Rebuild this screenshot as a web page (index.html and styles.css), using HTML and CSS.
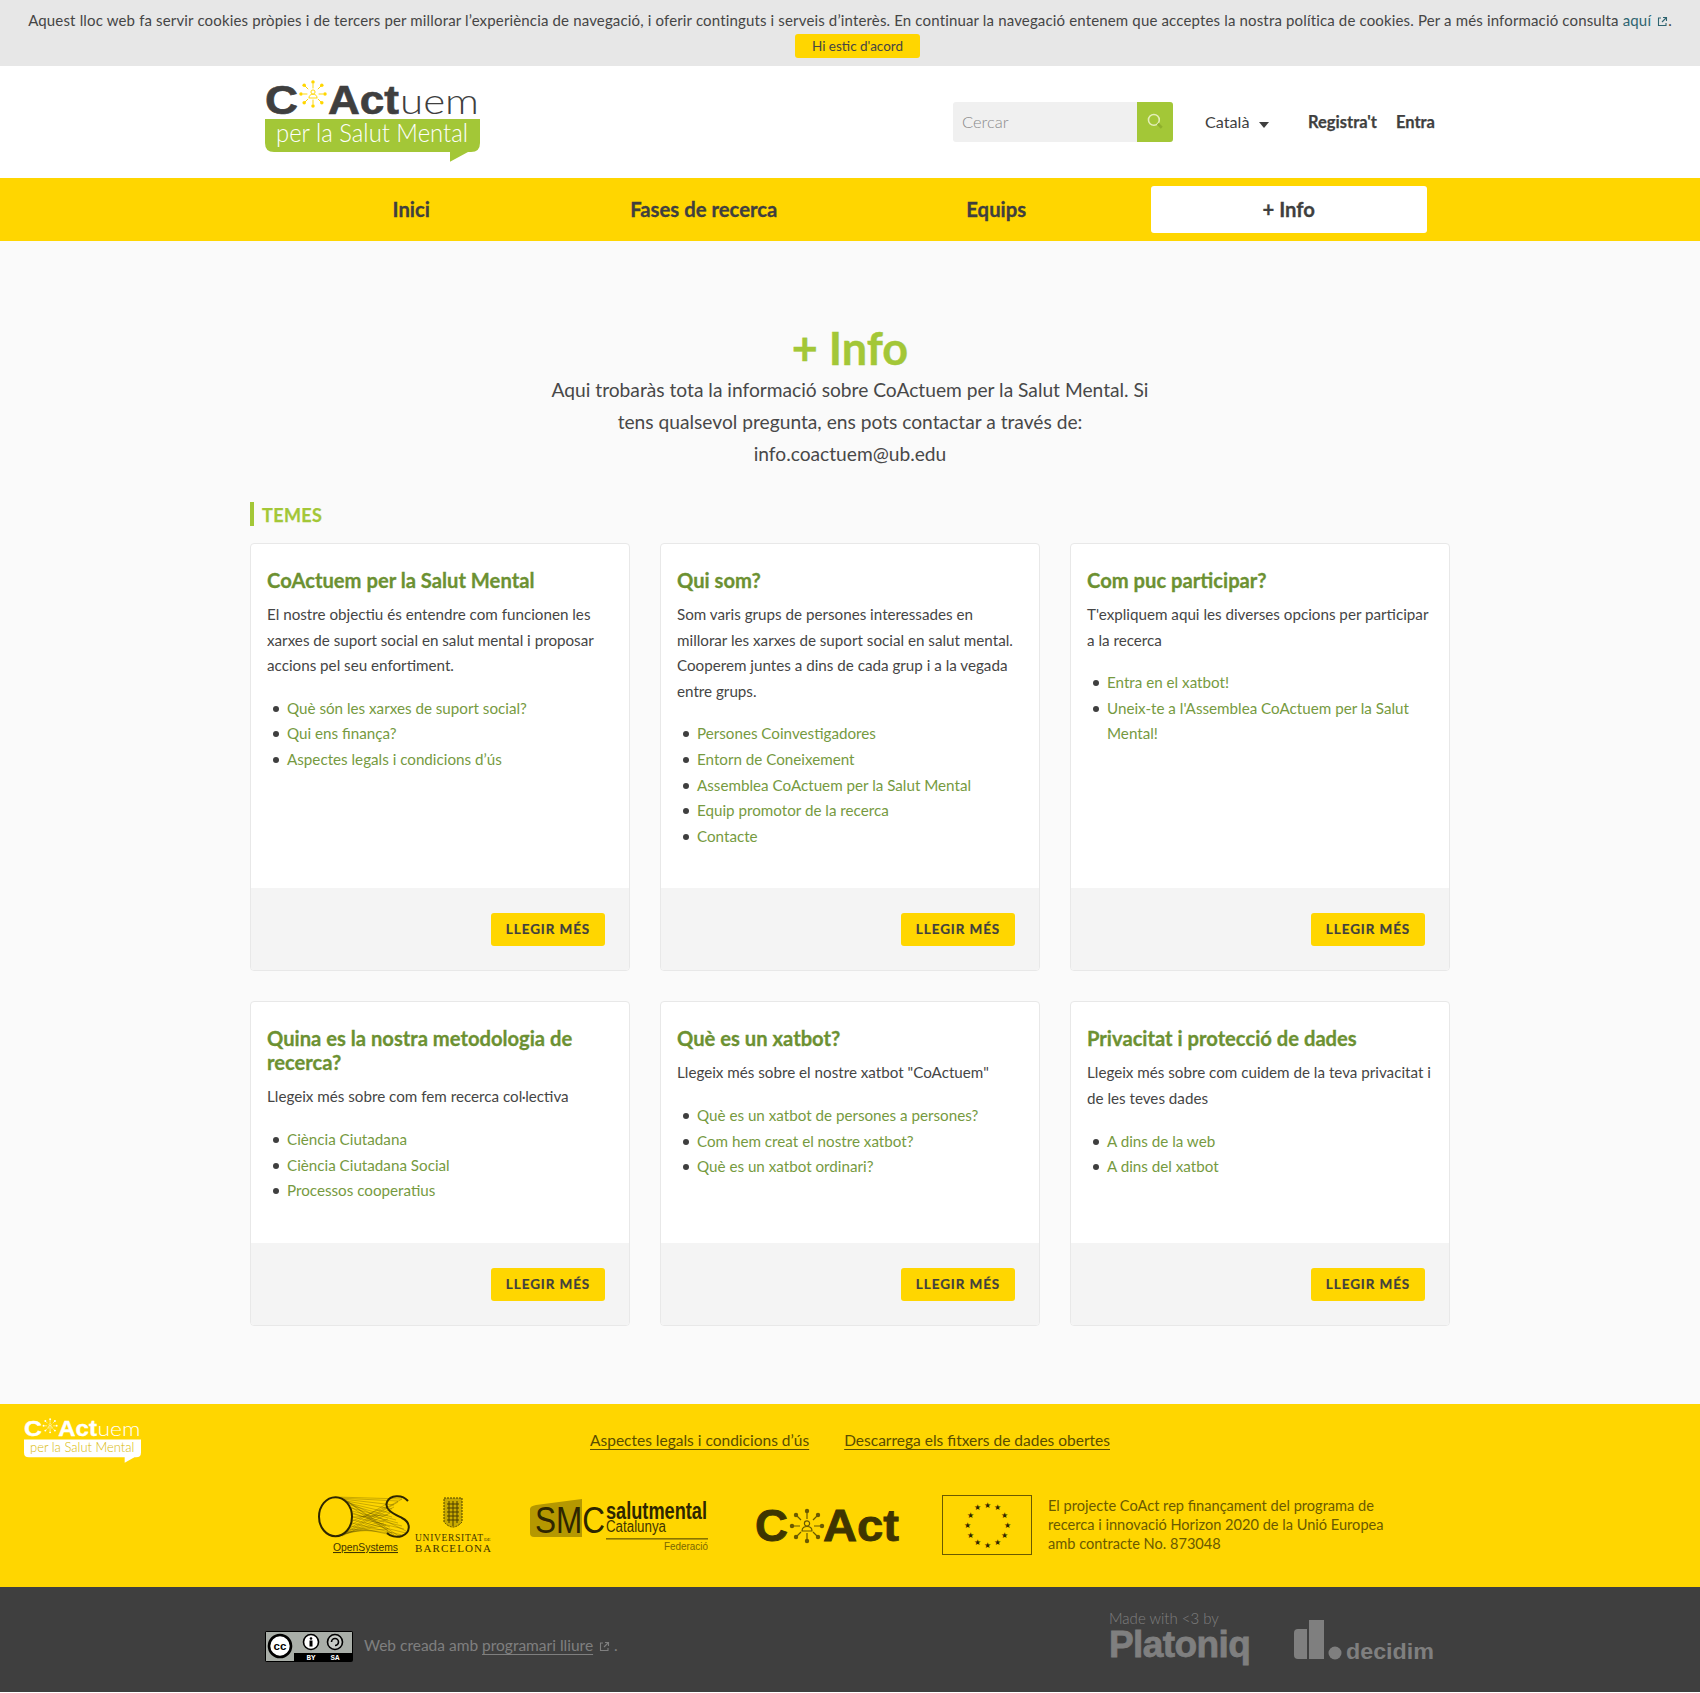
FILE: index.html
```html
<!DOCTYPE html>
<html lang="ca">
<head>
<meta charset="utf-8">
<title>CoActuem per la Salut Mental</title>
<link rel="stylesheet" href="styles.css">
</head>
<body>
<svg class="defs" width="0" height="0" aria-hidden="true">
  <defs>
    <g id="star">
      <g fill="none" stroke="currentColor" stroke-width="1.2">
        <path d="M0-7V-13M0 7V13M-7 0H-13M7 0H13M-6-6L-10-10M6-6L10-10M-6 6L-10 10M6 6L10 10"/>
        <circle cx="0" cy="-2.5" r="2.6"/>
        <path d="M-5 5C-5 1 -2 0.5 0 0.5S5 1 5 5Z"/>
      </g>
      <g fill="currentColor">
        <circle cx="0" cy="-15" r="2.2"/><circle cx="0" cy="15" r="2.2"/><circle cx="-15" cy="0" r="2.2"/><circle cx="15" cy="0" r="2.2"/>
        <circle cx="-11" cy="-11" r="2.2"/><circle cx="11" cy="-11" r="2.2"/><circle cx="-11" cy="11" r="2.2"/><circle cx="11" cy="11" r="2.2"/>
      </g>
    </g>
    <path id="ext" d="M4 2H1.5V9.5H9V7M6 1.5H9.500V5M9.500 1.5L5 6" fill="none" stroke="currentColor" stroke-width="1.1"/>
  </defs>
</svg>

<div class="cookie">
  <p class="cookie-text">Aquest lloc web fa servir cookies pròpies i de tercers per millorar l’experiència de navegació, i oferir continguts i serveis d’interès. En continuar la navegació entenem que acceptes la nostra política de cookies. Per a més informació consulta <a href="#">aquí <svg class="ext" viewBox="0 0 11 11"><use href="#ext"/></svg></a>.</p>
  <a class="cookie-btn" href="#">Hi estic d'acord</a>
</div>

<header class="top">
  <div class="wrap top-row">
    <svg class="logo" viewBox="0 0 215 82" role="img" aria-label="CoActuem per la Salut Mental">
      <text class="lg-b" x="0" y="33.500" font-size="41" fill="#3f3f3f" stroke="#3f3f3f" stroke-width=".7" textLength="33" lengthAdjust="spacingAndGlyphs">C</text>
      <g transform="translate(48 14) scale(.8)"><use href="#star" class="lg-star"/></g>
      <text class="lg-b" x="63" y="33.500" font-size="41" fill="#3f3f3f" stroke="#3f3f3f" stroke-width=".7" textLength="71" lengthAdjust="spacingAndGlyphs">Act</text>
      <text class="lg-r" x="135" y="33.500" font-size="36" fill="#3f3f3f" textLength="79" lengthAdjust="spacingAndGlyphs">uem</text>
      <path d="M0 39H215V63Q215 72 206 72H203L185 81.700V72H9Q0 72 0 63Z" fill="#a3c737"/>
      <text class="lg-r" x="11" y="61.500" font-size="25.500" fill="#fff" textLength="192" lengthAdjust="spacingAndGlyphs">per la Salut Mental</text>
    </svg>
    <div class="top-actions">
      <form class="search">
        <span class="search-input">Cercar</span>
        <span class="search-btn"><svg viewBox="0 0 16 16" width="18" height="18"><circle cx="7" cy="7" r="4.8" fill="none" stroke="#e3eeb8" stroke-width="1.4"/><path d="M10.500 10.500L14 14" stroke="#8fb02c" stroke-width="2.4"/></svg></span>
      </form>
      <span class="lang">Català <i class="caret"></i></span>
      <a class="user-link reg" href="#">Registra't</a>
      <a class="user-link" href="#">Entra</a>
    </div>
  </div>
</header>

<nav class="nav">
  <div class="wrap nav-row">
    <a href="#">Inici</a>
    <a href="#">Fases de recerca</a>
    <a href="#">Equips</a>
    <a href="#" class="active">+ Info</a>
  </div>
</nav>

<main class="main">
  <div class="wrap-wide">
    <h1 class="page-title">+ Info</h1>
    <p class="intro">Aqui trobaràs tota la informació sobre CoActuem per la Salut Mental. Si<br>tens qualsevol pregunta, ens pots contactar a través de:<br>info.coactuem@ub.edu</p>
    <h2 class="section-title">Temes</h2>
    <div class="cards">
      <article class="card">
        <div class="card-main">
          <h3>CoActuem per la Salut Mental</h3>
          <p>El nostre objectiu és entendre com funcionen les<br>xarxes de suport social en salut mental i proposar<br>accions pel seu enfortiment.</p>
          <ul>
            <li><a href="#">Què són les xarxes de suport social?</a></li>
            <li><a href="#">Qui ens finança?</a></li>
            <li><a href="#">Aspectes legals i condicions d’ús</a></li>
          </ul>
        </div>
        <div class="card-foot"><a class="more" href="#">Llegir més</a></div>
      </article>
      <article class="card">
        <div class="card-main">
          <h3>Qui som?</h3>
          <p>Som varis grups de persones interessades en<br>millorar les xarxes de suport social en salut mental.<br>Cooperem juntes a dins de cada grup i a la vegada<br>entre grups.</p>
          <ul>
            <li><a href="#">Persones Coinvestigadores</a></li>
            <li><a href="#">Entorn de Coneixement</a></li>
            <li><a href="#">Assemblea CoActuem per la Salut Mental</a></li>
            <li><a href="#">Equip promotor de la recerca</a></li>
            <li><a href="#">Contacte</a></li>
          </ul>
        </div>
        <div class="card-foot"><a class="more" href="#">Llegir més</a></div>
      </article>
      <article class="card">
        <div class="card-main">
          <h3>Com puc participar?</h3>
          <p>T'expliquem aqui les diverses opcions per participar<br>a la recerca</p>
          <ul>
            <li><a href="#">Entra en el xatbot!</a></li>
            <li><a href="#">Uneix-te a l'Assemblea CoActuem per la Salut<br>Mental!</a></li>
          </ul>
        </div>
        <div class="card-foot"><a class="more" href="#">Llegir més</a></div>
      </article>
      <article class="card">
        <div class="card-main">
          <h3>Quina es la nostra metodologia de<br>recerca?</h3>
          <p>Llegeix més sobre com fem recerca col·lectiva</p>
          <ul>
            <li><a href="#">Ciència Ciutadana</a></li>
            <li><a href="#">Ciència Ciutadana Social</a></li>
            <li><a href="#">Processos cooperatius</a></li>
          </ul>
        </div>
        <div class="card-foot"><a class="more" href="#">Llegir més</a></div>
      </article>
      <article class="card">
        <div class="card-main">
          <h3>Què es un xatbot?</h3>
          <p>Llegeix més sobre el nostre xatbot "CoActuem"</p>
          <ul>
            <li><a href="#">Què es un xatbot de persones a persones?</a></li>
            <li><a href="#">Com hem creat el nostre xatbot?</a></li>
            <li><a href="#">Què es un xatbot ordinari?</a></li>
          </ul>
        </div>
        <div class="card-foot"><a class="more" href="#">Llegir més</a></div>
      </article>
      <article class="card">
        <div class="card-main">
          <h3>Privacitat i protecció de dades</h3>
          <p>Llegeix més sobre com cuidem de la teva privacitat i<br>de les teves dades</p>
          <ul>
            <li><a href="#">A dins de la web</a></li>
            <li><a href="#">A dins del xatbot</a></li>
          </ul>
        </div>
        <div class="card-foot"><a class="more" href="#">Llegir més</a></div>
      </article>
    </div>
  </div>
</main>

<footer>
  <section class="foot-yellow">
    <div class="foot-links">
      <svg class="foot-logo" viewBox="0 0 215 82" role="img" aria-label="CoActuem per la Salut Mental">
        <text class="lg-b" x="0" y="33.500" font-size="41" fill="#fff" stroke="#fff" stroke-width=".7" textLength="33" lengthAdjust="spacingAndGlyphs">C</text>
        <g transform="translate(48 14) scale(.8)"><use href="#star" class="lg-star-w"/></g>
        <text class="lg-b" x="63" y="33.500" font-size="41" fill="#fff" stroke="#fff" stroke-width=".7" textLength="71" lengthAdjust="spacingAndGlyphs">Act</text>
        <text class="lg-r" x="135" y="33.500" font-size="36" fill="#fff" textLength="79" lengthAdjust="spacingAndGlyphs">uem</text>
        <path d="M0 39H215V63Q215 72 206 72H203L185 81.700V72H9Q0 72 0 63Z" fill="#fff"/>
        <text class="lg-r" x="11" y="61.500" font-size="25.500" fill="#d8b800" textLength="192" lengthAdjust="spacingAndGlyphs">per la Salut Mental</text>
      </svg>
      <div class="foot-menu">
        <a href="#">Aspectes legals i condicions d’ús</a>
        <a href="#">Descarrega els fitxers de dades obertes</a>
      </div>
    </div>
    <div class="partners">
      <svg class="p-os" viewBox="0 0 174 62" role="img" aria-label="OpenSystems, Universitat de Barcelona">
        <g fill="none" stroke="#4a3f00" stroke-width=".4" opacity=".75">
          <path d="M18 2L84 4M20 3L80 6M24 4L76 10M28 6L74 14M30 8L72 18M32 10L74 22M33 13L78 25M34 16L80 28M35 19L84 31M35 22L86 34M35 25L88 38M34 28L84 40M33 31L78 41M31 34L74 38M29 37L70 34M26 39L68 30M23 40L66 28M20 41L70 24M24 41L72 18M28 38L76 12M30 36L80 7M32 33L84 4M33 30L70 8M34 26L68 12M35 22L70 20M35 18L72 32M33 12L70 36M30 7L76 40M26 4L82 42M22 3L88 36"/>
        </g>
        <ellipse cx="17.500" cy="21.700" rx="16.500" ry="19.500" fill="none" stroke="#2e2600" stroke-width="2"/>
        <path d="M90 6C84 -1 72 0 69 7C66 15 76 19 84 23C94 28 92 38 84 41C78 43 72 41 69 38" fill="none" stroke="#2e2600" stroke-width="2"/>
        <text class="p-txt" x="15" y="56" font-size="10.500" fill="#3f3500" textLength="65" lengthAdjust="spacingAndGlyphs" text-decoration="underline">OpenSystems</text>
        <path d="M126 3H144V27Q135 37 126 27Z" fill="#c9aa00" stroke="#4a3f00" stroke-width="1" stroke-dasharray="2 1"/>
        <path d="M129 9H141M129 13H141M129 17H141M129 21H141M129 25H141M135 6V31M131 6V28M139 6V28" stroke="#4a3f00" stroke-width="1"/>
        <text class="p-serif" x="97" y="46" font-size="9.500" fill="#3f3500" textLength="68" lengthAdjust="spacing">UNIVERSITAT</text>
        <text class="p-serif" x="166" y="46" font-size="5" fill="#3f3500">DE</text>
        <text class="p-serif" x="97" y="57" font-size="11" fill="#3f3500" textLength="76" lengthAdjust="spacing">BARCELONA</text>
      </svg>
      <svg class="p-smc" viewBox="0 0 178 58" role="img" aria-label="SMC salutmental Catalunya Federació">
        <path d="M0 14Q0 11 6 10L52 4V42L4 42Q0 42 0 38Z" fill="#b59800"/>
        <text class="p-txt" x="5" y="37.700" font-size="36" fill="#2e2600" textLength="70" lengthAdjust="spacingAndGlyphs">SMC</text>
        <text class="p-bold" x="76" y="24" font-size="23" fill="#2e2600" textLength="101" lengthAdjust="spacingAndGlyphs">salutmental</text>
        <text class="p-txt" x="76" y="37" font-size="16" fill="#3f3500" textLength="60" lengthAdjust="spacingAndGlyphs">Catalunya</text>
        <rect x="76" y="43" width="102" height="1.600" fill="#8a7400"/>
        <text class="p-txt" x="134" y="55" font-size="11.500" fill="#7a6700" textLength="44" lengthAdjust="spacingAndGlyphs">Federació</text>
      </svg>
      <svg class="p-coact" viewBox="0 0 145 38" role="img" aria-label="CoAct">
        <text class="lg-b" x="0" y="33" font-size="44" fill="#3f3500" stroke="#3f3500" stroke-width=".8" textLength="33" lengthAdjust="spacingAndGlyphs">C</text>
        <use href="#star" x="52" y="18" class="lg-star-d"/>
        <text class="lg-b" x="68" y="33" font-size="44" fill="#3f3500" stroke="#3f3500" stroke-width=".8" textLength="76" lengthAdjust="spacingAndGlyphs">Act</text>
      </svg>
      <svg class="p-eu" viewBox="0 0 90 60" role="img" aria-label="European Union flag">
        <rect x=".5" y=".5" width="89" height="59" fill="none" stroke="#6b5a00"/>
        <g fill="#2e2600" font-size="8" text-anchor="middle" class="p-txt">
          <text x="45" y="12.700">★</text><text x="55" y="15.400">★</text><text x="62" y="22.700">★</text><text x="65" y="32.700">★</text><text x="62" y="42.700">★</text><text x="55" y="50">★</text><text x="45" y="52.700">★</text><text x="35" y="50">★</text><text x="28" y="42.700">★</text><text x="25" y="32.700">★</text><text x="28" y="22.700">★</text><text x="35" y="15.400">★</text>
        </g>
      </svg>
      <p class="eu-text">El projecte CoAct rep finançament del programa de<br>recerca i innovació Horizon 2020 de la Unió Europea<br>amb contracte No. 873048</p>
    </div>
  </section>
  <section class="foot-dark">
    <div class="wrap dark-row">
      <div class="credit">
        <svg class="cc" viewBox="0 0 88 31" role="img" aria-label="CC BY SA">
          <rect width="88" height="31" rx="2" fill="#000"/>
          <rect x="1" y="1" width="86" height="21" fill="#a9aea8"/>
          <rect x="1" y="1" width="28" height="29" fill="#a9aea8"/>
          <circle cx="15" cy="15" r="11" fill="#fff" stroke="#000" stroke-width="2.600"/>
          <text class="cc-t" x="15" y="19" font-size="11.500" text-anchor="middle" fill="#000">cc</text>
          <circle cx="46" cy="11" r="7.500" fill="#fff" stroke="#000" stroke-width="1.600"/>
          <circle cx="46" cy="7.500" r="1.300" fill="#000"/>
          <rect x="44.500" y="9.500" width="3" height="6" fill="#000"/>
          <circle cx="70" cy="11" r="7.500" fill="#c8ccc7" stroke="#000" stroke-width="1.600"/>
          <path d="M66.500 11A3.500 3.500 0 1 1 70 14.500" fill="none" stroke="#000" stroke-width="1.600"/>
          <text class="cc-b" x="46" y="29" font-size="7.500" text-anchor="middle" fill="#fff">BY</text>
          <text class="cc-b" x="70" y="29" font-size="7.500" text-anchor="middle" fill="#fff">SA</text>
        </svg>
        <span>Web creada amb <a href="#">programari lliure</a> <svg class="ext" viewBox="0 0 11 11"><use href="#ext"/></svg> .</span>
      </div>
      <div class="makers">
        <div class="platoniq">
          <span class="made">Made with &lt;3 by</span>
          <span class="plat-name">Platoniq</span>
        </div>
        <svg class="decidim" viewBox="0 0 141 40" role="img" aria-label="decidim">
          <path d="M4 9H13V39H4Q0 39 0 35V13Q0 9 4 9Z" fill="#7f7f7f"/>
          <path d="M15 0H30V39H15Z" fill="#7f7f7f"/>
          <circle cx="41" cy="33" r="6.500" fill="#7f7f7f"/>
          <text class="lg-b" x="52" y="39" font-size="22" fill="#7f7f7f" textLength="88" lengthAdjust="spacingAndGlyphs">decidim</text>
        </svg>
      </div>
    </div>
  </section>
</footer>
</body>
</html>
```

FILE: styles.css
```css
* { box-sizing: border-box; }
html, body { margin: 0; padding: 0; }
body {
  font-family: Lato, "Liberation Sans", sans-serif;
  font-size: 15.5px;
  color: #3f3f3f;
  background: #fff;
  overflow-x: hidden;
}
a { color: inherit; text-decoration: none; }
.defs { position: absolute; }
.wrap { width: 1170px; margin: 0 auto; }
.wrap-wide { width: 1200px; margin: 0 auto; }

/* cookie */
.cookie { height: 66px; background: #e7e7e7; text-align: center; padding-top: 8px; }
.cookie-text { margin: 0; font-size: 15px; line-height: 24px; padding: 0 12px; white-space: nowrap; font-weight: 400; color: #454545; letter-spacing: .155px; }
.cookie-text a { color: #2f6470; }
.ext { width: 11px; height: 11px; margin-left: 2px; vertical-align: -1px; color: inherit; }
.cookie-btn {
  display: block; width: 125px; height: 24px; margin: 2px 0 0 795px;
  background: #ffd600; border-radius: 3px; font-size: 13.500px; line-height: 24px; text-align: center; font-weight: 400; color: #454545;
}

/* header */
.top { height: 112px; background: #fff; }
.top-row { display: flex; align-items: flex-start; justify-content: space-between; padding-top: 14px; }
.logo { width: 215px; height: 82px; display: block; }
.lg-b { font-family: "Liberation Sans", sans-serif; font-weight: 700; }
.lg-r { font-family: Lato, sans-serif; font-weight: 300; }
.lg-star { color: #ffd600; }
.lg-star-w { color: #fff; }
.lg-star-d { color: #6b5a00; }
.top-actions { display: flex; align-items: center; height: 40px; margin-top: 22px; line-height: 38px; }
.search { display: flex; width: 220px; height: 40px; border-radius: 3px; overflow: hidden; background: #f0f0f0; }
.search-input { flex: 1; padding-left: 9px; line-height: 41px; color: #8a8a8a; font-size: 16.500px; font-weight: 300; }
.search-btn { width: 36px; background: #a3c737; display: flex; align-items: center; justify-content: center; padding-bottom: 3px; }
.lang { margin-left: 32px; width: 103px; font-weight: 400; font-size: 16.200px; }
.caret { display: inline-block; margin-left: 5px; vertical-align: 0; border: 5.500px solid transparent; border-top: 6px solid #3f3f3f; border-bottom: 0; }
.user-link { font-weight: 700; font-size: 16.500px; -webkit-text-stroke: .25px #3f3f3f; }
.reg { margin-right: 19px; }

/* nav */
.nav { height: 63px; background: #ffd600; }
.nav-row { display: grid; grid-template-columns: repeat(4, 1fr); height: 63px; padding-top: 8px; }
.nav-row a { height: 47px; margin: 0 8px; text-align: center; font-size: 20.300px; font-weight: 700; line-height: 46px; border-radius: 3px; -webkit-text-stroke: .3px #3f3f3f; }
.nav-row a.active { background: #fff; }

/* main */
.main { background: #fafafa; padding: 85px 0 78px; }
.page-title { margin: 0; text-align: center; color: #a3c737; font-size: 45px; line-height: 44px; font-weight: 700; -webkit-text-stroke: .4px #a3c737; }
.intro { margin: 4px 0 0; text-align: center; font-size: 19.200px; line-height: 32px; font-weight: 400; color: #484848; }
.section-title {
  margin: 32px 0 17px; height: 24px; border-left: 4px solid #a3c737; padding-left: 8px;
  color: #a3c737; font-size: 18px; line-height: 26px; text-transform: uppercase; font-weight: 700; letter-spacing: .4px; -webkit-text-stroke: .25px #a3c737;
}
.cards { display: grid; grid-template-columns: repeat(3, 380px); gap: 30px; }
.card { display: flex; flex-direction: column; background: #fff; border: 1px solid #e8e8e8; border-radius: 4px; overflow: hidden; }
.card-main { flex: 1; padding: 24px 16px 39px; }
.card h3 { margin: 0 0 10px; color: #6c9132; font-size: 20.200px; line-height: 24px; font-weight: 700; -webkit-text-stroke: .3px #6c9132; }
.card p { margin: 0 0 17px; font-size: 15.200px; line-height: 25.600px; font-weight: 400; color: #454545; }
.card ul { margin: 0; padding: 0 0 0 20px; list-style: none; font-size: 15.200px; line-height: 25.600px; }
.card li { position: relative; }
.card li::before { content: ""; position: absolute; left: -14px; top: 10px; width: 6px; height: 6px; border-radius: 50%; background: #3f3f3f; }
.card li a { color: #769a3f; font-weight: 400; }
.card-foot { height: 82px; background: #f4f4f4; display: flex; justify-content: flex-end; align-items: flex-start; padding: 25px 24px 0 0; }
.more {
  width: 114px; height: 33px; background: #ffd600; border-radius: 3px; text-align: center;
  font-size: 13.500px; line-height: 33px; font-weight: 700; text-transform: uppercase; letter-spacing: .9px; -webkit-text-stroke: .2px #3f3f3f;
}

/* footer */
.foot-yellow { height: 183px; background: #ffd600; }
.foot-links { display: grid; grid-template-columns: 1fr auto 1fr; padding: 14px 24px 0; height: 91px; }
.foot-logo { width: 117px; height: 45px; display: block; }
.foot-menu { display: flex; gap: 35px; padding-top: 10px; font-size: 15.500px; font-weight: 400; line-height: 24px; color: #5a4d00; }
.foot-menu a { text-decoration: underline; text-underline-offset: 3px; height: 24px; }
.partners { display: flex; justify-content: center; align-items: flex-start; }
.p-txt { font-family: "Liberation Sans", sans-serif; }
.p-serif { font-family: "Liberation Serif", serif; }
.p-bold { font-family: "Liberation Sans", sans-serif; font-weight: 700; }
.p-os { width: 174px; height: 62px; margin-right: 38px; }
.p-smc { width: 178px; height: 58px; margin-right: 47px; }
.p-coact { width: 145px; height: 38px; margin-top: 13px; margin-right: 42px; }
.p-eu { width: 90px; height: 60px; margin-right: 16px; }
.eu-text { margin: 0; font-size: 14.600px; line-height: 19px; color: #6b5a00; width: 334px; padding-top: 1px; white-space: nowrap; }

.foot-dark { height: 105px; background: #3f3f3f; color: #7f7f7f; }
.dark-row { display: flex; justify-content: space-between; align-items: flex-start; }
.credit { display: flex; align-items: center; gap: 11px; margin-top: 44px; font-size: 15.500px; font-weight: 400; }
.credit a { text-decoration: underline; text-underline-offset: 3px; }
.credit span { margin-top: -3px; }
.cc { width: 88px; height: 31px; display: block; }
.cc-t { font-family: "Liberation Sans", sans-serif; font-weight: 700; }
.cc-b { font-family: "Liberation Mono", monospace; font-weight: 700; }
.makers { display: flex; align-items: flex-end; margin-top: 22px; }
.platoniq { display: flex; flex-direction: column; width: 185px; }
.made { font-size: 15px; line-height: 18px; font-weight: 300; }
.plat-name { font-family: "Liberation Sans", sans-serif; font-weight: 700; font-size: 37px; line-height: 36px; letter-spacing: -.6px; -webkit-text-stroke: .8px #7f7f7f; }
.decidim { width: 141px; height: 40px; display: block; margin-bottom: 3px; }
```
